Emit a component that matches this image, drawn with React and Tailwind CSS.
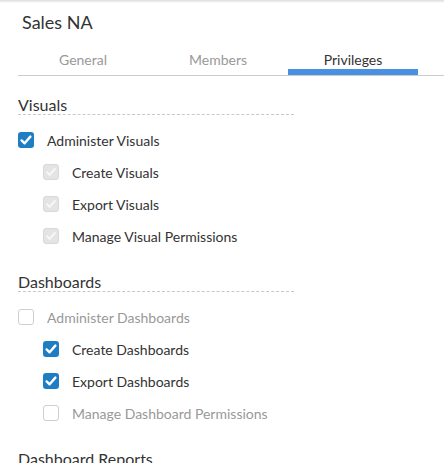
import React from "react";

const sections = [
  {
    title: "Visuals",
    parent: { label: "Administer Visuals", state: "checked" },
    items: [
      { label: "Create Visuals", state: "locked" },
      { label: "Export Visuals", state: "locked" },
      { label: "Manage Visual Permissions", state: "locked" },
    ],
  },
  {
    title: "Dashboards",
    parent: { label: "Administer Dashboards", state: "off", muted: true },
    items: [
      { label: "Create Dashboards", state: "checked" },
      { label: "Export Dashboards", state: "checked" },
      { label: "Manage Dashboard Permissions", state: "off", muted: true },
    ],
  },
];

const Check = ({ color }) => (
  <svg viewBox="0 0 16 16" className="w-4 h-4">
    <path d="M3.6 8.4 L6.6 11.3 L12.4 4.6" fill="none" stroke={color} strokeWidth="2.4" strokeLinecap="round" strokeLinejoin="round" />
  </svg>
);

const Box = ({ state }) => {
  if (state === "checked") {
    return (
      <div className="w-4 h-4 rounded-[3px] bg-[#1f7dc4] flex items-center justify-center">
        <Check color="#fff" />
      </div>
    );
  }
  if (state === "locked") {
    return (
      <div className="w-4 h-4 rounded-[3px] bg-[#e4e4e4] border border-[#d9d9d9] flex items-center justify-center">
        <Check color="#f7f7f7" />
      </div>
    );
  }
  return <div className="w-4 h-4 rounded-[3px] bg-white border border-[#cfcfcf]" />;
};

const Row = ({ label, state, muted, indent }) => (
  <div className={`h-8 flex items-center ${indent ? "pl-[25px]" : ""}`}>
    <Box state={state} />
    <span className={`ml-[13px] text-[14px] ${muted ? "text-[#999]" : "text-[#333]"}`}>{label}</span>
  </div>
);

export default function App() {
  const tabs = ["General", "Members", "Privileges"];
  const active = 2;

  return (
    <div className="w-[444px] h-[463px] overflow-hidden bg-white" style={{ fontFamily: "Lato, 'Noto Sans', sans-serif" }}>
      <div className="h-[3px] bg-gradient-to-b from-[#dcdcdc] to-white" />
      <div className="pl-[22px] pt-[7px] text-[18px] leading-[24px] text-[#333]">Sales NA</div>

      <div className="ml-[18px] mt-[16px] flex gap-[5px] border-b border-[#cccccc]">
        {tabs.map((t, i) => (
          <div
            key={t}
            className={`w-[130px] h-[25px] flex justify-center text-[14px] leading-[20px] ${
              i === active ? "text-[#333] border-b-[6px] border-[#4a90e2]" : "text-[#999]"
            }`}
          >
            {t}
          </div>
        ))}
      </div>

      <div className="pl-[18px] pt-[20px]">
        {sections.map((s) => (
          <div key={s.title} className="mb-[21px]">
            <div className="w-[276px] border-b border-dashed border-[#c8c8c8] text-[16px] leading-[18px] text-[#333]">
              {s.title}
            </div>
            <div className="mt-[9px]">
              <Row {...s.parent} />
              {s.items.map((it) => (
                <Row key={it.label} {...it} indent />
              ))}
            </div>
          </div>
        ))}
        <div className="w-[276px] text-[16px] leading-[18px] text-[#333]">Dashboard Reports</div>
      </div>
    </div>
  );
}
